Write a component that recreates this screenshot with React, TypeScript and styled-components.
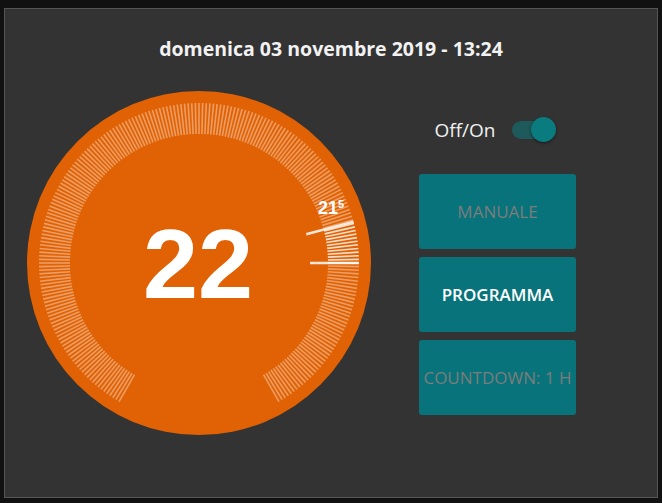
import styled, { createGlobalStyle } from 'styled-components';

const GlobalStyle = createGlobalStyle`
  html, body {
    margin: 0;
    padding: 0;
    background-color: #111111;
  }
  body {
    font-family: 'Open Sans', 'Noto Sans', sans-serif;
  }
`;

const Panel = styled.div`
  box-sizing: border-box;
  width: 654px;
  height: 490px;
  margin: 8px 0 0 4px;
  background-color: #333333;
  border: 1px solid #555555;
  padding: 28px 0 0 22px;
`;

const Title = styled.h1`
  margin: 0 0 30px -22px;
  font-size: 19.5px;
  line-height: 24px;
  font-weight: 700;
  color: #f2f2f2;
  text-align: center;
`;

const Body = styled.div`
  display: flex;
  align-items: flex-start;
`;

const Controls = styled.div`
  display: flex;
  flex-direction: column;
  align-items: center;
  width: 157px;
  margin-left: 48px;
  padding-top: 26px;
`;

const ToggleRow = styled.label`
  display: flex;
  align-items: center;
  gap: 17px;
  margin-left: -12px;
  margin-bottom: 31px;
  color: #f0f0f0;
  font-size: 19px;
`;

const Track = styled.span`
  position: relative;
  display: block;
  width: 36px;
  height: 18px;
  border-radius: 9px;
  background-color: #1e5a5b;
`;

const Thumb = styled.span<{ $on: boolean }>`
  position: absolute;
  top: -4px;
  left: ${(p) => (p.$on ? '19px' : '-6px')};
  width: 25px;
  height: 25px;
  border-radius: 50%;
  background-color: #0a7c7f;
  box-shadow: 0 1px 3px rgba(0, 0, 0, 0.5);
`;

const ModeButton = styled.button<{ $active?: boolean }>`
  box-sizing: border-box;
  width: 157px;
  height: 75px;
  margin-bottom: 8px;
  padding: 0;
  border: none;
  border-radius: 3px;
  background-color: #08737a;
  color: ${(p) => (p.$active ? '#ffffff' : '#7c7c7c')};
  font-family: 'Open Sans', 'Noto Sans', sans-serif;
  font-size: 17px;
  font-weight: ${(p) => (p.$active ? 600 : 400)};
  white-space: nowrap;
`;

const SIZE = 344;
const C = SIZE / 2;
const NUM_TICKS = 230;
const START = 30;
const END = 330;

function point(deg: number, r: number) {
  const a = (deg * Math.PI) / 180;
  return { x: C - r * Math.sin(a), y: C + r * Math.cos(a) };
}

function Dial({ target, ambient }: { target: number; ambient: number }) {
  // 0.5 gradi = 15 gradi di arco, target a ore 3
  const toAngle = (t: number) => 270 + (t - target) * 30;
  const targetAngle = toAngle(target);
  const ambientAngle = toAngle(ambient);
  const lo = Math.min(targetAngle, ambientAngle);
  const hi = Math.max(targetAngle, ambientAngle);

  const ticks = [];
  for (let i = 0; i <= NUM_TICKS; i++) {
    const deg = START + ((END - START) * i) / NUM_TICKS;
    const active = deg >= lo && deg <= hi;
    const p1 = point(deg, 129);
    const p2 = point(deg, 160);
    ticks.push(
      <line
        key={i}
        x1={p1.x}
        y1={p1.y}
        x2={p2.x}
        y2={p2.y}
        stroke="#ffffff"
        strokeOpacity={active ? 0.8 : 0.38}
        strokeWidth={1.6}
      />
    );
  }

  const big = [targetAngle, ambientAngle].map((deg, i) => {
    const p1 = point(deg, 111);
    const p2 = point(deg, 160);
    return (
      <line
        key={'b' + i}
        x1={p1.x}
        y1={p1.y}
        x2={p2.x}
        y2={p2.y}
        stroke="#ffffff"
        strokeOpacity={0.85}
        strokeWidth={2.4}
      />
    );
  });

  const whole = Math.floor(ambient);
  const frac = Math.round((ambient - whole) * 10);

  return (
    <svg width={SIZE} height={SIZE} viewBox={`0 0 ${SIZE} ${SIZE}`}>
      <circle cx={C} cy={C} r={172} fill="#e16204" />
      {ticks}
      {big}
      <text
        x={C - 1}
        y={C + 35}
        textAnchor="middle"
        fill="#ffffff"
        fontFamily="'Liberation Sans', Arial, sans-serif"
        fontWeight={700}
        fontSize={99}
      >
        {target}
      </text>
      <text
        x={291}
        y={123}
        fill="#ffffff"
        fontFamily="'Liberation Sans', Arial, sans-serif"
        fontWeight={700}
        fontSize={18}
      >
        {whole}
        <tspan fontSize={11} dy={-6}>
          {frac}
        </tspan>
      </text>
    </svg>
  );
}

export default function App() {
  return (
    <>
      <GlobalStyle />
      <Panel>
        <Title>domenica 03 novembre 2019 - 13:24</Title>
        <Body>
          <Dial target={22} ambient={21.5} />
          <Controls>
            <ToggleRow>
              Off/On
              <Track>
                <Thumb $on />
              </Track>
            </ToggleRow>
            <ModeButton>MANUALE</ModeButton>
            <ModeButton $active>PROGRAMMA</ModeButton>
            <ModeButton>COUNTDOWN: 1 H</ModeButton>
          </Controls>
        </Body>
      </Panel>
    </>
  );
}
